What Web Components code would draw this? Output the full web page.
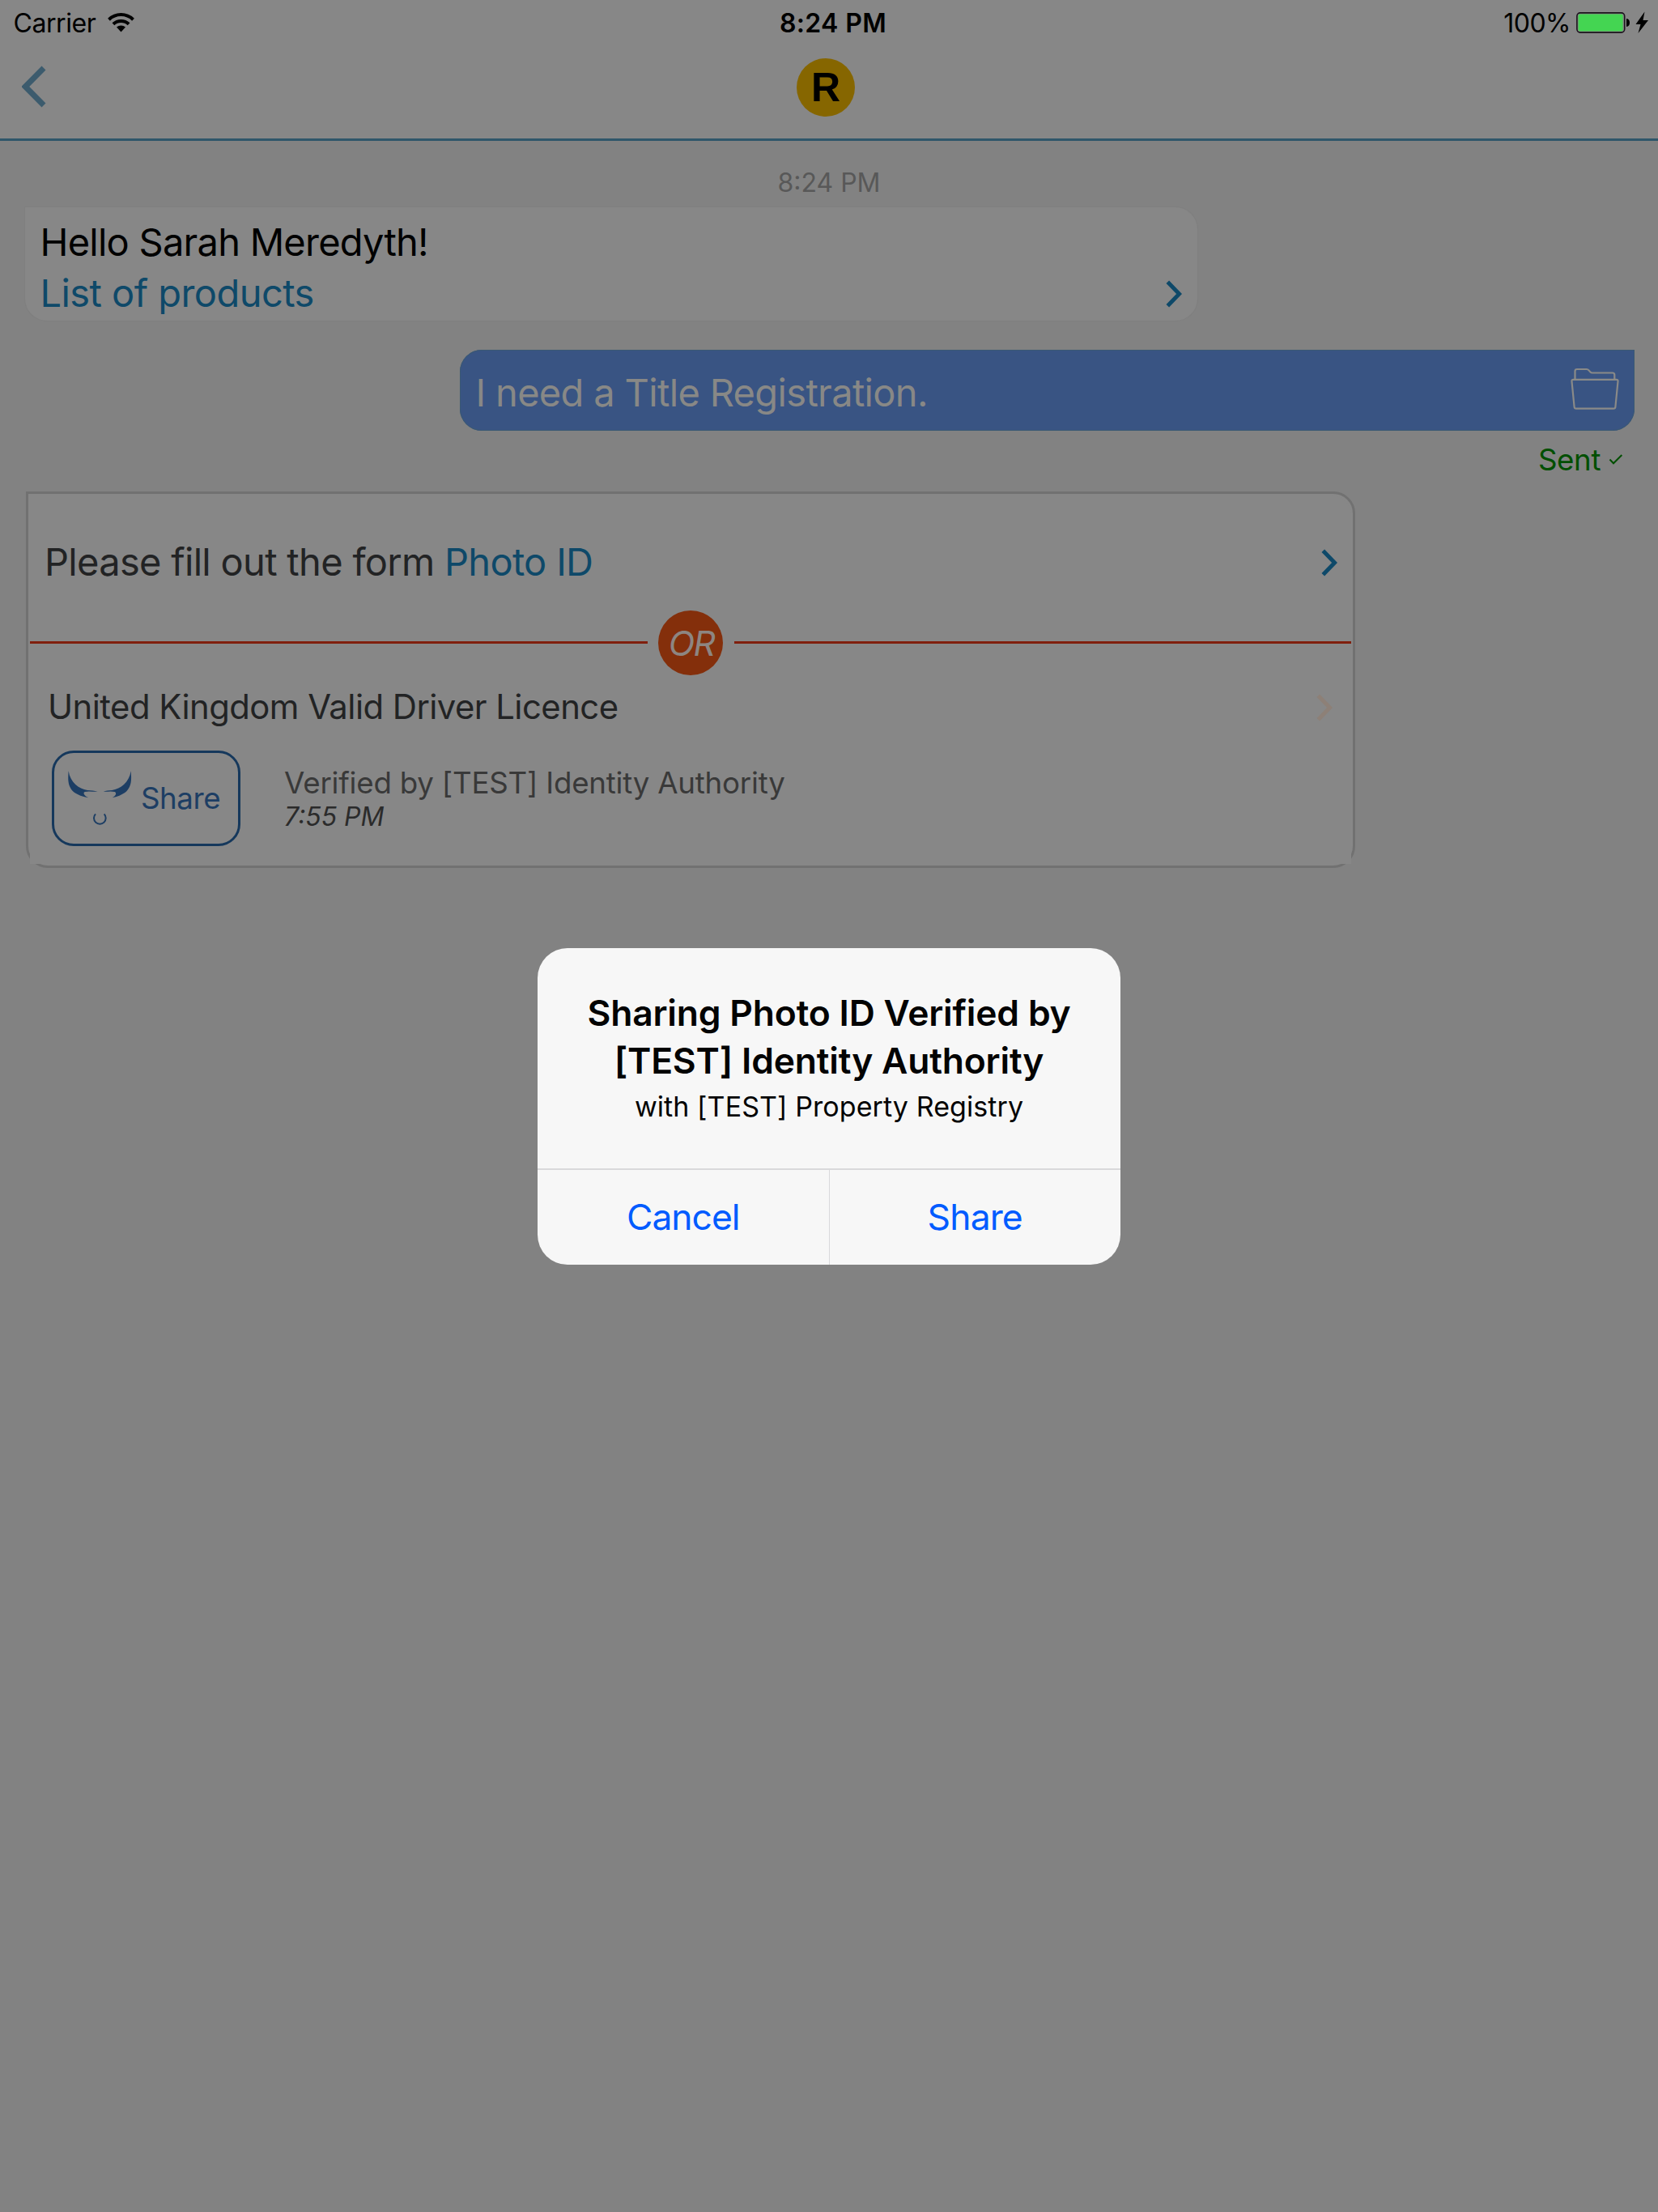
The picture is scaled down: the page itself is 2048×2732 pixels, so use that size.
<!DOCTYPE html>
<html lang="en">
<head>
<meta charset="utf-8">
<title>Property Registry chat</title>
<style>
html,body{margin:0;padding:0}
body{width:2048px;height:2732px;overflow:hidden;background:#828282;font-family:Inter,"Liberation Sans",sans-serif;color:#000}
</style>
</head>
<body>
<chat-screen></chat-screen>
<script>
const define = (name, html) => customElements.define(name, class extends HTMLElement {
  constructor() {
    super();
    const t = document.createElement('template');
    t.innerHTML = html;
    this.attachShadow({mode: 'open'}).append(t.content.cloneNode(true));
  }
});

define('chevron-icon', `
<style>:host{display:block;width:20px;height:34px}svg{display:block}</style>
<svg width="20" height="34" viewBox="0 0 20 34"><path d="M2.3 2.3L16.6 17 2.3 31.7" fill="none" stroke="currentColor" stroke-width="5"/></svg>`);

define('status-bar', `
<style>
:host{display:grid;grid-template-columns:1fr auto 1fr;height:53px;line-height:53px;font-size:32px;align-items:center}
.left,.right{display:flex;align-items:center}
.left span,.time,.right span{padding-top:2px;line-height:53px}
.left{padding-left:16.5px;letter-spacing:-.45px}
.left svg{margin:0 0 0 15px}
.time{font-weight:600;letter-spacing:.36px;padding-left:10px}
.right{justify-content:flex-end;padding-right:11px;letter-spacing:-.5px}
.right svg{margin:1px 0 0 7px}
</style>
<div class="left"><span>Carrier</span>
<svg width="33" height="25" viewBox="0 0 33 25"><g fill="none" stroke="#000" stroke-width="4"><path d="M1.5 9.2a21.5 21.5 0 0 1 30 0"/><path d="M6.9 14.8a14 14 0 0 1 19.2 0"/></g><path d="M11 18.6a8.3 8.3 0 0 1 11 0L16.5 24.6z"/></svg></div>
<div class="time">8:24 PM</div>
<div class="right"><span>100%</span>
<svg width="90" height="28" viewBox="0 0 90 28"><rect x=".9" y="1.9" width="58.8" height="24.2" rx="4" fill="#878787" stroke="#1c141c" stroke-width="1.6"/><rect x="2.6" y="3.6" width="55" height="20.8" rx="2" fill="#44d552"/><path d="M62 9q4 .6 4 5t-4 5z"/><path d="M84.5.5L73.5 16h6L76.500 27 89 11h-6.500z"/></svg></div>`);

define('nav-bar', `
<style>
:host{display:grid;grid-template-columns:1fr auto 1fr;height:118px;border-bottom:3px solid #2f566a;box-sizing:content-box;align-items:start}
.back{display:block;margin:28px 0 0 27px}
.logo{width:72px;height:72px;margin:19px 0 0 -8px;border-radius:50%;background:#866600;font:bold 50px/72px "Liberation Sans",Arial,sans-serif;text-align:center}
</style>
<svg class="back" width="31" height="52" viewBox="0 0 31 52"><path d="M27 3L4.300 26 27 49" fill="none" stroke="#3c5b6d" stroke-width="7"/></svg>
<div class="logo">R</div><span></span>`);

define('bot-bubble', `
<style>
:host{display:block;box-sizing:border-box;width:1448px;height:140px;margin-left:31px;padding:11px 19px 0 18.500px;border-radius:0 27px 27px 27px;background:#878787;box-shadow:0 0 0 1px #7f7f7f;font-size:47px;line-height:63px;letter-spacing:-.75px}
.row{display:flex;justify-content:space-between;align-items:center;letter-spacing:-.55px;color:#0e4969}
chevron-icon{margin-top:3px}
</style>
<div><slot></slot></div>
<div class="row"><slot name="link"></slot><chevron-icon></chevron-icon></div>`);

define('user-bubble', `
<style>
:host{display:flex;justify-content:space-between;align-items:flex-start;box-sizing:border-box;width:1451px;height:100px;margin:36px 0 0 568px;padding:5px 19px 0 19.500px;border-radius:27px 0 27px 27px;background:#395483;box-shadow:inset 0 0 0 1px #3a5973;font-size:47px;line-height:96px;letter-spacing:-.66px;color:#888886}
svg{margin-top:17px}
</style>
<slot></slot>
<svg width="60" height="54" viewBox="0 0 60 54"><g fill="none" stroke="#8a8a88" stroke-width="2.200" stroke-linejoin="round"><path d="M5.500 14.500V4.500q0-2.500 2.500-2.500h11.500q2 0 3.300 1.600l1.700 2q.8.900 2.300.9h25q2.500 0 2.500 2.500v5.500"/><path d="M3.500 14.800h53q2.200 0 2 2.200l-3.100 31.500q-.2 2.200-2.400 2.200H7q-2.200 0-2.400-2.200L1.500 17q-.2-2.200 2-2.200z"/></g></svg>`);

define('sent-status', `
<style>
:host{display:flex;justify-content:flex-end;box-sizing:border-box;height:75px;padding:8px 43px 0 0;font-size:36.700px;line-height:56px;letter-spacing:-.4px;color:#004f00}
svg{margin:19.500px 0 0 10px}
</style>
<slot></slot><svg width="18" height="15" viewBox="0 0 18 15"><path d="M1.500 7.500L6 12.300 16.300 2" fill="none" stroke="currentColor" stroke-width="2"/></svg>`);

define('or-divider', `
<style>
:host{display:flex;align-items:center;gap:13.500px;height:80px}
i{flex:1;height:3px;margin-bottom:1px;background:#801f0d}
em{width:80px;height:80px;border-radius:50%;background:#842f0b;color:#8d8682;font-size:42.500px;line-height:81px;letter-spacing:-1.700px;text-align:center;text-indent:2px}
</style><i></i><em>OR</em><i></i>`);

define('share-button', `
<style>
:host{display:flex;align-items:flex-start;box-sizing:border-box;width:233px;height:118px;border:3px solid #15385c;border-radius:27px;color:#1d3e64;font-size:36.700px;letter-spacing:-.43px;line-height:112px}
svg{margin:22px 11.500px 0 16.500px}
</style>
<svg width="79" height="70" viewBox="0 0 237 210"><g fill="currentColor"><path d="M2 1C8 42 40 68 72 72C86 73 98 74 110 77C92 78 76 74 62 78C54 82 60 92 76 100C58 97 34 90 18 76C0 56-1 36 2 1z"/><path d="M233 1C227 42 195 68 163 72C149 73 140 74 131 77C145 78 159 74 173 78C181 82 178 92 164 100C180 97 201 90 217 76C235 56 236 36 233 1z"/></g><path d="M102 160a22 22 0 1 0 32 0" fill="none" stroke="currentColor" stroke-width="6"/></svg>
<span><slot></slot></span>`);

define('form-card', `
<style>
:host{display:block;box-sizing:border-box;width:1642px;height:465px;margin-left:32px;padding:2px;border:3px solid #717171;border-radius:0 27px 27px 27px;background:#878787}
.inner{height:455px;border-radius:0 24px 0 0;background:#878787}
.ask{display:flex;justify-content:space-between;box-sizing:border-box;height:142px;padding:22px 17px 0 18px;font-size:47px;line-height:120px;letter-spacing:-.69px;color:#222324}
.ask chevron-icon{margin-top:44px;color:#0e4969}
.doc{display:flex;justify-content:space-between;padding:10px 23px 0 22px;font-size:41.800px;line-height:58px;letter-spacing:-.53px;color:#222324}
.doc chevron-icon{color:#8d8077;margin-top:13px}
.proof{display:flex;padding:25px 0 0 27px}
.by{margin:20px 0 0 54px;color:#393939;font-size:36.700px;line-height:40px;letter-spacing:-.22px}
.by em{display:block;margin-top:2px;font-size:32px;color:#2b2b2b;letter-spacing:0}
a{color:#0e4969}
</style>
<div class="inner">
<div class="ask"><span>Please fill out the form <a>Photo ID</a></span><chevron-icon></chevron-icon></div>
<or-divider></or-divider>
<div class="doc"><span>United Kingdom Valid Driver Licence</span><chevron-icon></chevron-icon></div>
<div class="proof"><share-button>Share</share-button><div class="by">Verified by [TEST] Identity Authority<em>7:55 PM</em></div></div>
</div>`);

define('alert-dialog', `
<style>
:host{display:block;position:absolute;left:664px;top:1171px;width:720px;height:391px;border-radius:37px;background:#f7f7f7;overflow:hidden;text-align:center}
.head{box-sizing:border-box;height:274px;padding-top:51px;border-bottom:2px solid #d9d9db;color:#030303}
.title{font-weight:600;font-size:44.400px;line-height:58.600px;letter-spacing:-.18px}
.msg{margin-top:6px;font-size:34px;line-height:44px;letter-spacing:.08px}
.actions{display:flex;height:117px;font-size:44.400px;line-height:117px;color:#005bff}
.actions div{flex:1;letter-spacing:-.85px}
.actions div:first-child{letter-spacing:-1px}
.actions div+div{border-left:1.500px solid #d9d9db}
</style>
<div class="head"><div class="title">Sharing Photo ID Verified by<br>[TEST] Identity Authority</div><div class="msg">with [TEST] Property Registry</div></div>
<div class="actions"><div>Cancel</div><div>Share</div></div>`);

define('chat-screen', `
<style>
:host{display:block;position:relative;width:2048px;height:2732px}
header{background:#878787}
.stamp{box-sizing:border-box;height:82px;padding-top:21px;text-align:center;font-size:32px;line-height:61px;color:#585858}
</style>
<header><status-bar></status-bar><nav-bar></nav-bar></header>
<main>
<div class="stamp">8:24 PM</div>
<bot-bubble>Hello Sarah Meredyth!<span slot="link">List of products</span></bot-bubble>
<user-bubble>I need a Title Registration.</user-bubble>
<sent-status>Sent</sent-status>
<form-card></form-card>
</main>
<alert-dialog></alert-dialog>`);
</script>
</body>
</html>
